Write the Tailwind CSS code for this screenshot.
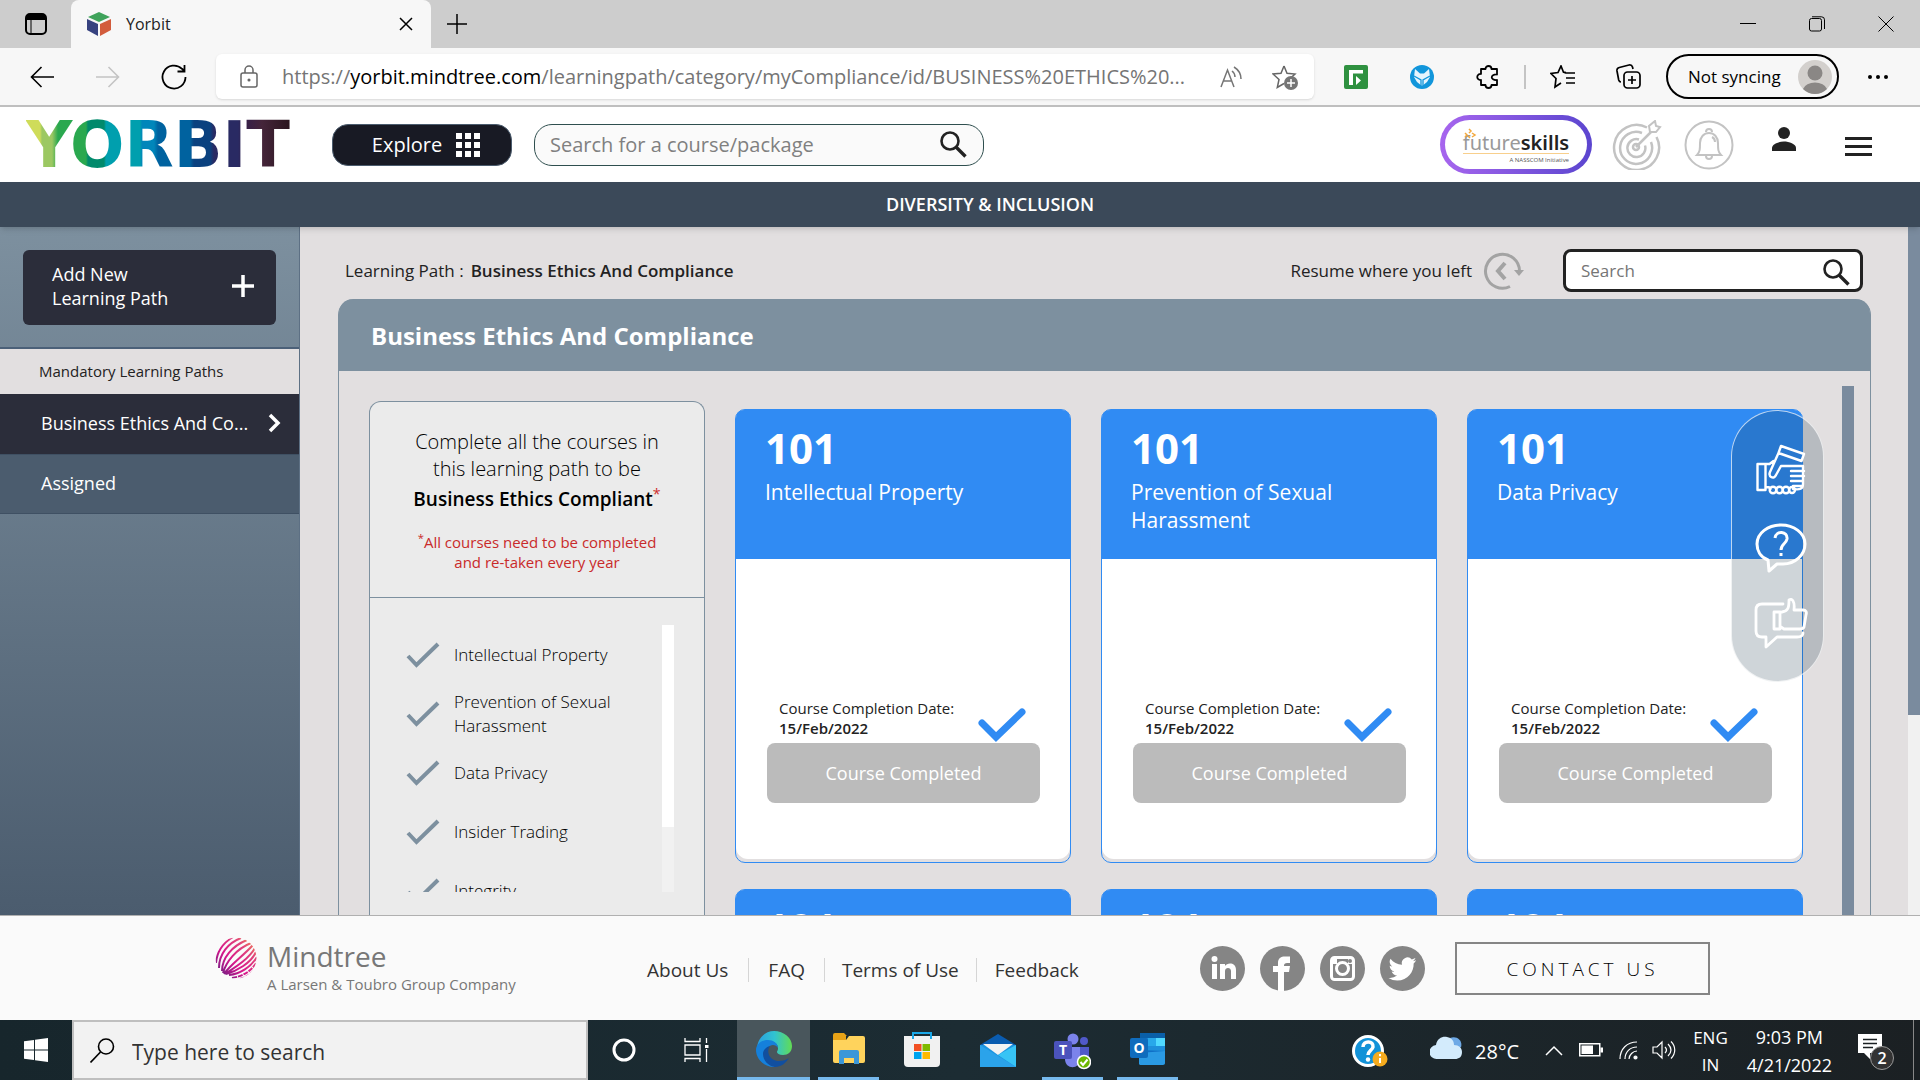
<!DOCTYPE html>
<html lang="en">
<head>
<meta charset="utf-8">
<title>Yorbit</title>
<script src="https://cdn.jsdelivr.net/npm/@tailwindcss/browser@4"></script>
</head>
<body class="flex h-screen flex-col overflow-hidden bg-[#e2dfe0] font-['Open_Sans',sans-serif] text-[#222]">

<svg class="hidden">
  <symbol id="mag" viewBox="0 0 27 27"><circle cx="10" cy="10" r="8.500" fill="none" stroke="#222" stroke-width="2.600"/><path d="M16 16l9.500 9.500" stroke="#222" stroke-width="3.300"/></symbol>
  <symbol id="tick" viewBox="0 0 34 26"><path d="M2 14l8.500 9L32 2" fill="none" stroke="#7d909f" stroke-width="4"/></symbol>
  <symbol id="done" viewBox="0 0 48 34"><path d="M4 15l14 14L44 4" fill="none" stroke="#308bf3" stroke-width="7" stroke-linecap="round"/></symbol>
</svg>

<!-- Browser tabs -->
<div class="flex h-12 shrink-0 bg-[#cdcdcd]">
  <button aria-label="Tab actions" class="flex w-[71px] items-center justify-center"><svg width="22" height="22" viewBox="0 0 22 22"><rect x="1" y="1" width="20" height="20" rx="4" fill="none" stroke="#000" stroke-width="2"/><path d="M1 5a4 4 0 014-4h12a4 4 0 014 4v2H1z"/><path d="M6 6v15" stroke="#000"/></svg></button>
  <div class="flex w-[360px] items-center rounded-t-lg bg-[#f7f7f7] pr-4 pl-4">
    <svg width="24" height="24" viewBox="0 0 24 24"><path d="M12 0l11 5-11 5L1 5z" fill="#3fa35b"/><path d="M0 7l11 5v12L0 18z" fill="#36427f"/><path d="M24 7l-11 5v12l11-6z" fill="#d25c3c"/></svg>
    <span class="ml-[15px] flex-1 text-base leading-6 text-[#222]">Yorbit</span>
    <button aria-label="Close tab"><svg width="18" height="18" viewBox="0 0 18 18"><path d="M3 3l12 12M15 3L3 15" stroke="#000" stroke-width="1.500"/></svg></button>
  </div>
  <button aria-label="New tab" class="flex w-[52px] items-center justify-center"><svg width="20" height="20" viewBox="0 0 20 20"><path d="M10 0v20M0 10h20" stroke="#000" stroke-width="1.500"/></svg></button>
  <div class="flex-1"></div>
  <button aria-label="Minimize" class="flex w-[69px] items-center justify-center"><svg width="16" height="16"><path d="M0 7.500h16" stroke="#000" stroke-width="1"/></svg></button>
  <button aria-label="Restore" class="flex w-[69px] items-center justify-center"><svg width="16" height="16" fill="none" stroke="#000"><rect x=".5" y="2.500" width="12" height="12.500" rx="2"/><path d="M3 .8h9.500a3 3 0 013 3V13"/></svg></button>
  <button aria-label="Close" class="flex w-[69px] items-center justify-center"><svg width="16" height="16"><path d="M.5.5l15 15M15.500.5l-15 15" stroke="#000"/></svg></button>
</div>

<!-- Address bar -->
<div class="flex h-[59px] shrink-0 items-center border-b-2 border-[#bfbfbf] bg-[#f7f7f7] pr-[3px] pl-[9px]">
  <button aria-label="Back" class="flex w-[66px] justify-center"><svg width="24" height="22" viewBox="0 0 24 22" fill="none" stroke="#000" stroke-width="1.600"><path d="M24 11H1M11.500 1L1.500 11l10 10"/></svg></button>
  <button aria-label="Forward" class="flex w-[66px] justify-center"><svg width="24" height="22" viewBox="0 0 24 22" fill="none" stroke="#c4c4c4" stroke-width="1.600"><path d="M0 11h23M12.500 1l10 10-10 10"/></svg></button>
  <button aria-label="Refresh" class="flex w-[66px] justify-center"><svg width="26" height="26" viewBox="0 0 26 26" fill="none" stroke="#000" stroke-width="1.800"><path d="M24.500 13A11.500 11.500 0 1121 4.800L23.500 7M23.500 1v6.500h-7"/></svg></button>
  <div class="ml-[9px] flex h-[45px] flex-1 items-center rounded-md bg-white pr-4 pl-6 shadow-sm">
    <svg width="18" height="23" viewBox="0 0 18 23" fill="none" stroke="#666" stroke-width="1.500"><rect x="1" y="8" width="16" height="14" rx="2"/><path d="M5 8V5a4 4 0 018 0v3"/><circle cx="9" cy="15" r=".8" fill="#666"/></svg>
    <div class="ml-6 flex-1 text-[20px] leading-7 whitespace-nowrap text-[#757575]">https://<span class="text-black">yorbit.mindtree.com</span>/learningpath/category/myCompliance/id/BUSINESS%20ETHICS%20...</div>
    <button aria-label="Read aloud" class="mr-[30px]"><svg width="22" height="22" viewBox="0 0 22 22" fill="none" stroke="#757575" stroke-width="1.500"><path d="M1 21L7.500 4 14 21M3.500 15h8M12 5c2 1.500 3 4 3 6M14 1c4 2.500 7 6 7 12"/></svg></button>
    <button aria-label="Add to favorites"><svg width="26" height="26" viewBox="0 0 26 26"><path d="M12 2l3 7.200 8 .8-6 5.500M12 2L9 9.200 1 10l6 5.500-1.700 8L12 19.500" fill="none" stroke="#666" stroke-width="1.500"/><circle cx="19" cy="19" r="7" fill="#757575"/><path d="M19 15v8M15 19h8" stroke="#fff" stroke-width="1.500"/></svg></button>
  </div>
  <button aria-label="Flow extension" class="ml-[9px] flex w-[66px] justify-center"><svg width="24" height="24" viewBox="0 0 24 24"><rect width="24" height="24" rx="2" fill="#2f9140"/><path d="M5 20V5h14v3.500H9V20z" fill="#fff"/><path d="M12 11v9l5-4.500z" fill="#fff"/></svg></button>
  <button aria-label="Fox extension" class="flex w-[66px] justify-center"><svg width="24" height="24" viewBox="0 0 24 24"><circle cx="12" cy="12" r="12" fill="#1296db"/><path d="M5 4l5 4.500h4L19 4l1 8-3 5-5 4-5-4-3-5z" fill="#e6f4fd"/><path d="M4 11l7 4v6M20 11l-7 4v6" fill="none" stroke="#1296db" stroke-width="1.300"/></svg></button>
  <button aria-label="Extensions" class="flex w-[66px] justify-center"><svg width="24" height="24" viewBox="0 0 24 24" fill="none" stroke="#000" stroke-width="1.800" stroke-linejoin="round"><path d="M5 4h4.500c0-4 6-4 6 0H21v5.500c-7-.5-7 6 0 5.500V20h-5.500c0 4-6 4-6 0H5v-5c-5 .5-5-6.500 0-6z"/></svg></button>
  <div class="mx-[3px] h-6 w-[2px] bg-[#c4c4c4]"></div>
  <button aria-label="Favorites" class="flex w-[66px] justify-center"><svg width="25" height="24" viewBox="0 0 25 24" fill="none" stroke="#000" stroke-width="1.700"><path d="M16 7.500l-2.500-.3L11 1 8 7.500 1 8.500l5 5L5 22l6-4M14.500 8H25M16 13h9M16 18h9"/></svg></button>
  <button aria-label="Collections" class="flex w-[66px] justify-center"><svg width="25" height="25" viewBox="0 0 25 25" fill="none" stroke="#000" stroke-width="1.700"><rect x="8" y="8" width="16" height="16" rx="3.500"/><path d="M16 12v8M12 16h8M5 18c-1.500 0-2-1-2.300-2L1 7c-.3-2 .5-3 2.300-3.500L13 1c2-.3 3 .3 3.500 2l.5 2"/></svg></button>
  <button class="ml-[5px] flex h-[45px] w-[173px] items-center justify-between rounded-full border-2 border-black pr-[5px] pl-[20px] text-[17px] text-black">Not syncing
    <svg width="34" height="34" viewBox="0 0 34 34"><circle cx="17" cy="17" r="17" fill="#d3d0cd"/><circle cx="17" cy="13" r="7.500" fill="#8a8785"/><path d="M5 29a12.500 9 0 0124 0 17 17 0 01-24 0z" fill="#8a8785"/></svg>
  </button>
  <button aria-label="Settings" class="flex w-[78px] justify-center"><svg width="20" height="4"><circle cx="2" cy="2" r="2"/><circle cx="10" cy="2" r="2"/><circle cx="18" cy="2" r="2"/></svg></button>
</div>

<!-- Site header -->
<header class="flex h-[75px] shrink-0 items-center bg-white pr-12 pl-[26px]">
  <a href="#" class="w-[306px] bg-[linear-gradient(90deg,#cfdc5a_0,#cfdc5a_14px,#9cc862_16px,#9cc862_26px,#2aa84f_32px,#2aa84f_60px,#018a6c_62px,#018a6c_78px,#009fae_80px,#009fae_114px,#0086ba_116px,#0086ba_128px,#00629f_132px,#00629f_164px,#0a417f_168px,#0a417f_184px,#292a63_188px,#292a63_212px,#351f4a_218px,#45253a_236px,#2c1620_262px)] bg-clip-text font-['DejaVu_Sans',sans-serif] text-[64px] leading-[74px] font-bold text-transparent">YORBIT</a>
  <button class="flex h-[42px] w-[180px] items-center justify-center gap-3.5 rounded-2xl border border-[#4b5c6e] bg-[#181a24] pl-2 text-[20px] text-white">Explore
    <svg width="24" height="24" viewBox="0 0 24 24" fill="#fff"><path d="M0 0h6v6H0zM9 0h6v6H9zM18 0h6v6h-6zM0 9h6v6H0zM9 9h6v6H9zM18 9h6v6h-6zM0 18h6v6H0zM9 18h6v6H9zM18 18h6v6h-6z"/></svg>
  </button>
  <form class="ml-[22px] flex h-[42px] w-[450px] items-center rounded-[18px] border border-[#2f4f4f] bg-[#fafafa] pr-4 pl-[15px]">
    <input aria-label="Search for a course or package" placeholder="Search for a course/package" class="min-w-0 flex-1 text-[20px] outline-none placeholder:text-[#808080]">
    <button aria-label="Search"><svg width="27" height="27"><use href="#mag"/></svg></button>
  </form>
  <div class="flex-1"></div>
  <a href="#" class="h-[59px] w-[152px] rounded-full bg-linear-to-r from-[#a765ee] to-[#5b45cf] p-[5px]">
    <span class="relative flex h-full flex-col items-center justify-center rounded-full bg-white pt-2 leading-none">
      <span class="font-['Noto_Sans',sans-serif] text-[20px] leading-5 text-[#999]">future<b class="font-semibold text-[#222]">skills</b></span>
      <span class="h-px w-[106px] bg-[#f8cf8c]"></span>
      <span class="w-[106px] pt-[2px] text-right text-[6px] leading-[8px] text-[#555]">A NASSCOM Initiative</span>
      <svg class="absolute top-2 left-[18px]" width="14" height="13" fill="none" stroke="#f3a83c" stroke-width="1.500"><path d="M2 5l2 2-2 2M6 1l2 2-2 2M9 5l3 2-3 2M5 8l2 2"/></svg>
    </span>
  </a>
  <button aria-label="Goals" class="ml-5"><svg width="50" height="50" viewBox="0 0 50 50" fill="none" stroke="#c3c3c3" stroke-width="2.500"><path d="M35 7.500A22.500 22.500 0 1044.500 17M30 13A16 16 0 1039 22M27 19.500a9 9 0 106 6M24 27l15-15"/><path d="M38 12l-1-6 6-5 1 5 4 1-4 5z" stroke-width="2"/><circle cx="24" cy="27" r="3"/></svg></button>
  <button aria-label="Notifications" class="ml-[22px]"><svg width="50" height="50" viewBox="0 0 50 50" fill="none" stroke="#c3c3c3" stroke-width="2"><circle cx="25" cy="25" r="23.500"/><path d="M13 35c3-3 3-6 3-12 0-6 4-10 9-10s9 4 9 10c0 6 0 9 3 12zM22 12a3 3 0 016 0M22 36a3 3 0 006 0M28 17c2 1 3 3 3 5"/></svg></button>
  <button aria-label="Profile" class="mb-3 ml-[37px]"><svg width="26" height="26" viewBox="0 0 26 26" fill="#222"><circle cx="13" cy="7" r="6"/><path d="M1 25v-3c0-4 7-6.500 12-6.500S25 18 25 22v3z"/></svg></button>
  <button aria-label="Menu" class="mt-1 ml-12"><svg width="27" height="19" viewBox="0 0 27 19"><path d="M0 1.500h27M0 9.500h27M0 17.500h27" stroke="#222" stroke-width="3"/></svg></button>
</header>

<div class="relative z-10 flex h-[45px] shrink-0 items-center justify-center bg-[#3b4959] pl-[60px] text-[18px] font-semibold text-white shadow-md">DIVERSITY &amp; INCLUSION</div>

<div class="relative flex min-h-0 flex-1">
  <!-- Sidebar -->
  <nav class="w-[300px] shrink-0 border-r border-[#5d7084] bg-linear-to-b from-[#7d909f] to-[#4b5c6e]">
    <div class="px-[23px] pt-[23px] pb-[22px]">
      <button class="flex h-[75px] w-full items-center justify-between rounded-md bg-[#2b2d3a] pr-[22px] pb-[4px] pl-[29px] text-left text-[18px] leading-6 text-white"><span>Add New<br>Learning Path</span>
        <svg width="22" height="22"><path d="M11 0v22M0 11h22" stroke="#fff" stroke-width="3.500"/></svg></button>
    </div>
    <h2 class="h-[47px] border-t-2 border-[#4b6078] bg-[#e2dfe0] pl-[39px] text-[15px] leading-[45px]">Mandatory Learning Paths</h2>
    <a href="#" class="flex h-[60px] items-center justify-between bg-[#2b2d3a] pr-[18px] pb-[2px] pl-[41px] text-[18px] text-white">Business Ethics And Co...
      <svg width="13" height="20" fill="none" stroke="#fff" stroke-width="3.500"><path d="M2 2l8 8-8 8"/></svg></a>
    <a href="#" class="flex h-[60px] items-center border-y border-[#3f5063] bg-[#4b5c6e] pb-[2px] pl-[41px] text-[18px] text-white">Assigned</a>
  </nav>

  <!-- Learning path -->
  <main class="flex min-w-0 flex-1 flex-col pt-[22px] pl-[38px]">
    <div class="flex h-[43px] items-center pr-[45px] pl-[7px] text-[17px]">
      <span>Learning Path :</span><b class="ml-[7px] font-semibold">Business Ethics And Compliance</b>
      <span class="ml-auto">Resume where you left</span>
      <button aria-label="Resume" class="ml-[11px]"><svg width="42" height="38" viewBox="0 0 42 38" fill="none" stroke="#a3a3a3" stroke-width="3"><path d="M27 34.500A17 17 0 1136.500 19"/><path d="M22 11l-7 8 7 8" stroke-width="4"/><path d="M31 18h10l-5 6z" fill="#a3a3a3" stroke="none"/></svg></button>
      <form class="ml-[38px] flex h-[43px] w-[300px] items-center rounded-lg border-[3px] border-[#222] bg-white pr-[10px] pl-[15px]">
        <input aria-label="Search" placeholder="Search" class="min-w-0 flex-1 text-[17px] outline-none placeholder:text-[#757575]">
        <button aria-label="Search courses" class="pt-1"><svg width="27" height="27"><use href="#mag"/></svg></button>
      </form>
    </div>

    <section class="mt-[7px] mr-[37px] flex min-h-0 flex-1 flex-col rounded-t-2xl border-x border-[#7d909f]">
      <h1 class="h-[72px] shrink-0 rounded-t-[14px] bg-[#7d909f] pl-8 text-[24px] leading-[74px] font-bold text-white">Business Ethics And Compliance</h1>
      <div class="flex min-h-0 flex-1 overflow-hidden pr-4 pl-[30px]">
        <aside class="mt-[30px] flex w-[336px] shrink-0 flex-col rounded-t-xl border border-b-0 border-[#7d909f] bg-[#ebebeb]">
          <div class="h-[196px] shrink-0 border-b border-[#7d909f] pt-[26px] text-center text-[19px] leading-[27px] text-black">
            <p class="text-[20px] font-light">Complete all the courses in<br>this learning path to be</p>
            <p class="mt-1 font-semibold">Business Ethics Compliant<sup class="font-normal text-[#cf2e2e]">*</sup></p>
            <p class="mt-[19px] text-[15px] leading-5 font-medium text-[#c92a2a]"><sup>*</sup>All courses need to be completed<br>and re-taken every year</p>
          </div>
          <div class="mt-[27px] mb-[23px] flex min-h-0 flex-1 overflow-hidden pr-[30px] pl-9 text-[17px] leading-6 font-light text-black">
            <ul class="flex-1">
              <li class="flex h-[59px] items-center gap-[14px]"><svg width="34" height="26"><use href="#tick"/></svg>Intellectual Property</li>
              <li class="flex h-[59px] items-center gap-[14px]"><svg width="34" height="26"><use href="#tick"/></svg><span>Prevention of Sexual<br>Harassment</span></li>
              <li class="flex h-[59px] items-center gap-[14px]"><svg width="34" height="26"><use href="#tick"/></svg>Data Privacy</li>
              <li class="flex h-[59px] items-center gap-[14px]"><svg width="34" height="26"><use href="#tick"/></svg>Insider Trading</li>
              <li class="flex h-[59px] items-center gap-[14px]"><svg width="34" height="26"><use href="#tick"/></svg>Integrity</li>
            </ul>
            <div class="w-3 bg-[#f1f1f1]"><div class="h-[202px] bg-white"></div></div>
          </div>
        </aside>

        <div class="mt-[38px] grid flex-1 auto-rows-[454px] grid-cols-3 gap-x-[30px] gap-y-[26px] pl-[30px]">
          <article class="rounded-[10px] border border-[#308bf3]">
            <div class="h-[149px] rounded-t-lg bg-[#308bf3] px-[29px] pt-[9px] text-white"><h2 class="text-[42px] leading-[58px] font-bold">101</h2><h3 class="pt-px text-[21px] leading-7">Intellectual Property</h3></div>
            <div class="flex h-[300px] flex-col justify-end rounded-b-xl bg-white pr-[30px] pb-14 pl-[31px]">
              <div class="mb-px flex items-end justify-between pr-[14px] pl-3 text-[15px] leading-5"><p class="mb-1">Course Completion Date:<br><b class="font-semibold">15/Feb/2022</b></p><svg width="48" height="34"><use href="#done"/></svg></div>
              <button class="h-[60px] shrink-0 rounded-lg bg-[#bbb] text-[18px] text-white">Course Completed</button>
            </div>
          </article>
          <article class="rounded-[10px] border border-[#308bf3]">
            <div class="h-[149px] rounded-t-lg bg-[#308bf3] px-[29px] pt-[9px] text-white"><h2 class="text-[42px] leading-[58px] font-bold">101</h2><h3 class="pt-px text-[21px] leading-7">Prevention of Sexual Harassment</h3></div>
            <div class="flex h-[300px] flex-col justify-end rounded-b-xl bg-white pr-[30px] pb-14 pl-[31px]">
              <div class="mb-px flex items-end justify-between pr-[14px] pl-3 text-[15px] leading-5"><p class="mb-1">Course Completion Date:<br><b class="font-semibold">15/Feb/2022</b></p><svg width="48" height="34"><use href="#done"/></svg></div>
              <button class="h-[60px] shrink-0 rounded-lg bg-[#bbb] text-[18px] text-white">Course Completed</button>
            </div>
          </article>
          <article class="rounded-[10px] border border-[#308bf3]">
            <div class="h-[149px] rounded-t-lg bg-[#308bf3] px-[29px] pt-[9px] text-white"><h2 class="text-[42px] leading-[58px] font-bold">101</h2><h3 class="pt-px text-[21px] leading-7">Data Privacy</h3></div>
            <div class="flex h-[300px] flex-col justify-end rounded-b-xl bg-white pr-[30px] pb-14 pl-[31px]">
              <div class="mb-px flex items-end justify-between pr-[14px] pl-3 text-[15px] leading-5"><p class="mb-1">Course Completion Date:<br><b class="font-semibold">15/Feb/2022</b></p><svg width="48" height="34"><use href="#done"/></svg></div>
              <button class="h-[60px] shrink-0 rounded-lg bg-[#bbb] text-[18px] text-white">Course Completed</button>
            </div>
          </article>
          <article class="rounded-[10px] border border-[#308bf3]"><div class="h-[149px] rounded-t-lg bg-[#308bf3] px-[29px] pt-[9px] text-white"><h2 class="text-[42px] leading-[58px] font-bold">101</h2></div></article>
          <article class="rounded-[10px] border border-[#308bf3]"><div class="h-[149px] rounded-t-lg bg-[#308bf3] px-[29px] pt-[9px] text-white"><h2 class="text-[42px] leading-[58px] font-bold">101</h2></div></article>
          <article class="rounded-[10px] border border-[#308bf3]"><div class="h-[149px] rounded-t-lg bg-[#308bf3] px-[29px] pt-[9px] text-white"><h2 class="text-[42px] leading-[58px] font-bold">101</h2></div></article>
        </div>
        <div class="mt-[15px] ml-[39px] w-3 shrink-0 bg-[#7a8b9e]"></div>
      </div>
    </section>
  </main>
  <div class="w-3 shrink-0 bg-[#f1f1f1]"><div class="h-[488px] bg-[#7a8b9e]"></div></div>

  <!-- Floating help actions -->
  <div class="absolute top-[183px] right-24 flex h-[272px] w-[93px] flex-col items-center rounded-full border border-white/70 bg-[#0f2c42]/20 pt-[33px] pl-[7px]">
    <button aria-label="Onboarding"><svg width="50" height="52" viewBox="0 0 50 52" fill="none" stroke="#fff" stroke-width="2.400" stroke-linejoin="round" stroke-linecap="round"><path d="M1.500 20h8v26h-8zM9.500 20h4l4-3M25 2l23 8-2.500 7-23-8zM22.500 9L14 28c-2 5 4 8 6 3l5-9h22v18c0 5-3 6-10 5M9.500 43c3 0 4 0 5 2M48 27H35M48 32H35M47 37H35M46 42H37"/><circle cx="17" cy="46" r="3.300"/><circle cx="23.500" cy="46" r="3.300"/><circle cx="30" cy="46" r="3.300"/><circle cx="36" cy="46" r="3"/></svg></button>
    <button aria-label="Help" class="mt-[27px]"><svg width="52" height="50" viewBox="0 0 52 50" fill="none" stroke="#fff" stroke-width="3" stroke-linejoin="round"><path d="M13 37C5 34 2 27 2 21 2 10 13 2 26 2s24 8 24 19-10 20-22 20h-6l-8 7z"/><path d="M20 15c1-8 13-7 12 1-1 5-6 5-6 11"/><path d="M26 30v3"/></svg></button>
    <button aria-label="Feedback" class="mt-6"><svg width="54" height="52" viewBox="0 0 54 52" fill="none" stroke="#fff" stroke-width="2.800" stroke-linejoin="round" stroke-linecap="round"><path d="M29 7H8c-4 0-6 2-6 6v21c0 4 2 6 6 6h4v10l11-10h20c4 0 6-1 6-4"/><path d="M20 15h6v17h-6zM28 15c6-1 7-4 7-12 3-2 6 1 5 10h9c3 0 4 2 3 5l-2 12c-1 2-2 2-4 2H30l-3-2"/></svg></button>
  </div>
</div>

<!-- Site footer -->
<footer class="flex h-[105px] shrink-0 items-center border-t border-[#b0b0b0] bg-[#fafafa] pl-[215px]">
  <div class="flex w-[432px] pb-[6px]">
    <svg width="42" height="42" viewBox="0 0 42 42"><defs><linearGradient id="mt" gradientUnits="userSpaceOnUse" x1="2" y1="40" x2="40" y2="2"><stop stop-color="#5b2483"/><stop offset=".4" stop-color="#d6168b"/><stop offset=".75" stop-color="#e0457b"/><stop offset="1" stop-color="#f58a4b"/></linearGradient><clipPath id="mc"><circle cx="21" cy="21" r="20.500"/></clipPath></defs>
      <g clip-path="url(#mc)" fill="none" stroke="url(#mt)" stroke-width="2"><path d="M1 26C2 14 8 6 18 0M4 31C4 17 13 6 26 1M7 34C7 21 17 9 32 3M8 36C11 25 21 12 36 6M9 37C15 28 27 20 38 8M10 37C19 31 33 23 40 11M11 37C22 34 36 26 41 15M14 38C25 37 36 30 42 20"/><path d="M17 41C29 39 36 34 42 25M25 42C33 40 37 36 41 31" stroke-dasharray="5 1"/></g></svg>
    <div class="ml-[10px] text-[#777]"><div class="text-[28px] leading-[38px]">Mindtree</div><div class="text-[15px] leading-[18px] font-medium">A Larsen &amp; Toubro Group Company</div></div>
  </div>
  <div class="flex items-center pt-1 text-[19px] leading-6 text-[#333]">
    <a href="#" class="border-r border-[#d5d5d5] pr-5">About Us</a><a href="#" class="border-r border-[#d5d5d5] px-[19px]">FAQ</a><a href="#" class="border-r border-[#d5d5d5] px-[17px]">Terms of Use</a><a href="#" class="pl-[18px]">Feedback</a>
  </div>
  <div class="ml-auto flex gap-[15px]">
    <a href="#" aria-label="LinkedIn"><svg width="45" height="45" viewBox="0 0 45 45"><circle cx="22.500" cy="22.500" r="22.500" fill="#858585"/><g fill="#fff"><circle cx="14.500" cy="13" r="3"/><path d="M12 18h5v15h-5zM20 18h5v2c2-3.500 11-4 11 4v9h-5v-8c0-4-6-4-6 0v8h-5z"/></g></svg></a>
    <a href="#" aria-label="Facebook"><svg width="45" height="45" viewBox="0 0 45 45"><circle cx="22.500" cy="22.500" r="22.500" fill="#858585"/><path d="M18 45V26h-5v-6h5v-3c0-5 3-6.500 7-6.500h5V17h-3c-2 0-3 1-3 2.500V20h6l-1 6h-5v19z" fill="#fff"/></svg></a>
    <a href="#" aria-label="Instagram"><svg width="45" height="45" viewBox="0 0 45 45"><circle cx="22.500" cy="22.500" r="22.500" fill="#858585"/><rect x="11.500" y="11.500" width="22" height="22" rx="3" fill="none" stroke="#fff" stroke-width="3"/><circle cx="22.500" cy="22.500" r="6" fill="none" stroke="#fff" stroke-width="3"/><path d="M11 18h6v-6h-6zM28 18h6v-5h-6z" fill="#fff"/><circle cx="30" cy="15" r="2" fill="#858585"/></svg></a>
    <a href="#" aria-label="Twitter"><svg width="45" height="45" viewBox="0 0 45 45"><circle cx="22.500" cy="22.500" r="22.500" fill="#858585"/><path transform="translate(8.500 8.500) scale(1.170)" d="M23.600 4.900c-.8.400-1.800.6-2.700.8 1-.6 1.700-1.600 2.100-2.700-.9.500-2 .9-3.100 1.200a4.900 4.900 0 00-8.400 4.500C7.700 8.500 4 6.600 1.700 3.600a4.900 4.900 0 001.500 6.600c-.8 0-1.600-.2-2.200-.6v.1c0 2.400 1.700 4.300 3.900 4.800-.7.200-1.500.2-2.200.1.600 2 2.400 3.400 4.600 3.400A9.900 9.900 0 010 20a14 14 0 007.500 2.200c9.100 0 14.300-7.700 14-14.600.9-.7 1.600-1.600 2.100-2.700z" fill="#fff"/></svg></a>
  </div>
  <button class="mr-[210px] ml-[30px] h-[53px] w-[255px] border-2 border-[#858585] pt-[2px] text-[19px] font-light tracking-[4px] text-black">CONTACT US</button>
</footer>

<!-- Taskbar -->
<div class="flex h-[60px] shrink-0 items-stretch bg-linear-to-r from-[#17262c] via-[#1c2c33] to-[#1b2023] text-white">
  <button aria-label="Start" class="flex w-[72px] items-center justify-center"><svg width="24" height="24" viewBox="0 0 24 24" fill="#fff"><path d="M0 3.300l10-1.400v9.500H0zM11 1.700L24 0v11.400H11zM0 12.500h10v9.500L0 20.700zM11 12.500h13V24l-13-1.800z"/></svg></button>
  <div class="flex w-[516px] items-center border-2 border-[#bfbfbf] bg-[#f2f2f2] pl-4">
    <svg width="25" height="25" viewBox="0 0 25 25" fill="none" stroke="#000" stroke-width="1.600"><circle cx="16" cy="8.500" r="7.500"/><path d="M10.500 14L.5 24.500"/></svg>
    <input aria-label="Type here to search" placeholder="Type here to search" class="ml-[17px] min-w-0 flex-1 pt-[5px] text-[21px] outline-none placeholder:text-[#333]">
  </div>
  <button aria-label="Cortana" class="flex w-[72px] items-center justify-center"><svg width="24" height="24"><circle cx="12" cy="12" r="10" fill="none" stroke="#fff" stroke-width="3"/></svg></button>
  <button aria-label="Task view" class="flex w-[77px] items-center justify-center pr-[5px]"><svg width="25" height="24" viewBox="0 0 25 24" fill="none" stroke="#fff" stroke-width="1.300"><path d="M1 0v3.500h15V0M1 24v-3.500h15V24M1 7h15v10H1zM22.500 0v5M22.500 11v13"/><path d="M21 7h3.500v3H21z" fill="#fff" stroke="none"/></svg></button>
  <button aria-label="Edge" class="flex w-[73px] items-center justify-center border-b-[3px] border-[#76b9ed] bg-[#49565c]"><svg width="36" height="36" viewBox="0 0 36 36"><defs><linearGradient id="eg" x1="0" y1="0" x2="1" y2="0"><stop stop-color="#2a9fe0"/><stop offset=".5" stop-color="#31c3d0"/><stop offset="1" stop-color="#62dc54"/></linearGradient></defs><path d="M1 17C2 6 10 0 18 0c10 0 18 7 18 15 0 6-4 9-9 9-4 0-6-1.500-6-3 0-1 1-1 1-4 0-4-4-7-9-7-6 0-10 3-12 7z" fill="url(#eg)"/><path d="M0 19c0-6 6-10 12-10 5 0 10 3 10 8-1-2-3-3-5-3-4 0-7 4-7 9 0 6 4 11 10 13C10 37 0 29 0 19z" fill="#1580db"/><path d="M14 15c-4 5-1 15 9 15 4 0 7-1 10-3-3 5-8 9-14 9-7-1-12-7-12-13 0-4 3-7 7-8z" fill="#114f9f"/></svg></button>
  <button aria-label="File Explorer" class="ml-2 flex w-[61px] items-center justify-center border-b-[3px] border-[#76b9ed]"><svg width="32" height="32" viewBox="0 0 32 32"><path d="M0 2a2 2 0 012-2h9l3 3h-1v5H0z" fill="#e8a317"/><path d="M0 7h13l3-4h14a2 2 0 012 2v23a2 2 0 01-2 2H2a2 2 0 01-2-2z" fill="#ffd35c"/><path d="M6 31V19a2 2 0 012-2h16a2 2 0 012 2v12h-5v-6H11v6z" fill="#3b97d8"/></svg></button>
  <button aria-label="Store" class="ml-[6px] flex w-[74px] items-center justify-center"><svg width="36" height="36" viewBox="0 0 36 36"><path d="M9 7V1h18v6" fill="none" stroke="#1ba8e8" stroke-width="2"/><path d="M0 4h36v27a4 4 0 01-4 4H4a4 4 0 01-4-4z" fill="#f1f1f1"/><path d="M9 7V4M27 7V4" stroke="#1ba8e8" stroke-width="2"/><path d="M10 12h7.500v7H10z" fill="#f25022"/><path d="M18.500 12H26v7h-7.500z" fill="#7fba00"/><path d="M10 20h7.500v7H10z" fill="#00a4ef"/><path d="M18.500 20H26v7h-7.500z" fill="#ffb900"/></svg></button>
  <button aria-label="Mail" class="flex w-[76px] items-center justify-center pl-[2px]"><svg width="36" height="33" viewBox="0 0 36 33"><path d="M0 11L18 0l18 11z" fill="#0a5cb0"/><path d="M0 11h36v22H0z" fill="#1c94e0"/><path d="M3 10h30L18 21z" fill="#f3f3f3"/><path d="M36 11v22L18 21z" fill="#37c4f5"/><path d="M0 33V11l36 22z" fill="#2ba3ea"/></svg></button>
  <button aria-label="Teams" class="ml-[7px] flex w-[61px] items-center justify-center border-b-[3px] border-[#76b9ed]"><svg class="mt-[6px]" width="37" height="38" viewBox="0 0 37 38"><circle cx="30" cy="8" r="4" fill="#5059c9"/><path d="M24 14h11v12c0 6-8 6-11 3z" fill="#5059c9"/><circle cx="19" cy="6" r="5.500" fill="#7b83eb"/><path d="M11 14h15v12c0 11-15 11-15 0z" fill="#7b83eb"/><rect y="8" width="18" height="18" rx="2" fill="#4b53bc"/><text x="9" y="22" fill="#fff" font-size="14" font-weight="700" text-anchor="middle">T</text><circle cx="30" cy="29" r="6.500" fill="#6bb700" stroke="#fff" stroke-width="1.500"/><path d="M26.500 29l2.500 3 4.500-5.500" fill="none" stroke="#fff" stroke-width="2"/></svg></button>
  <button aria-label="Outlook" class="ml-[14px] flex w-[61px] items-center justify-center border-b-[3px] border-[#76b9ed]"><svg width="36" height="32" viewBox="0 0 36 32"><rect x="10" width="25" height="22" rx="2" fill="#1e8fdb"/><path d="M10 0h25v5H10z" fill="#0a5fa8"/><path d="M18 5h8v8h-8z" fill="#28a8ea"/><path d="M26 5h9v8h-9z" fill="#50d9ff"/><path d="M9 17l26 14V18z" fill="#0f6fc6"/><path d="M9 31V20l26-2v12a2 2 0 01-2 2H11a2 2 0 01-2-1z" fill="#2a9ae4"/><rect y="5" width="18" height="20" rx="2" fill="#0f6cbd"/><text x="9" y="20" fill="#fff" font-size="14" font-weight="700" text-anchor="middle">O</text></svg></button>

  <div class="ml-auto flex items-center">
    <button aria-label="Get help" class="mt-1 mr-[42px]"><svg width="36" height="34" viewBox="0 0 36 34"><circle cx="16" cy="16" r="14.500" fill="#1292d8" stroke="#fff" stroke-width="3"/><path d="M11 12c0-7 11-6.500 10 0-.5 3-5 4-5 8" fill="none" stroke="#fff" stroke-width="3.500"/><circle cx="16" cy="24.500" r="2.200" fill="#fff"/><circle cx="28" cy="24" r="7.500" fill="#f5ab1e"/><path d="M28 23v5M28 19v2.200" stroke="#fff" stroke-width="2"/></svg></button>
    <button class="mr-[26px] flex items-center gap-[13px] pt-1 text-[20px]"><svg class="mb-2" width="32" height="24" viewBox="0 0 32 24"><path d="M20 2c7-3 13 3 11 9l-6 4z" fill="#6ea9e6"/><path d="M7 23a7 7 0 01-1-14C7 2 13 0 17 1c5 1 7 4 7 8 5 0 8 3 8 7 0 5-3 7-7 7z" fill="#d3ebfc"/></svg>28°C</button>
    <button aria-label="Show hidden icons" class="mr-4"><svg width="18" height="11" fill="none" stroke="#fff" stroke-width="1.500"><path d="M1 10l8-8 8 8"/></svg></button>
    <button aria-label="Battery" class="mr-4"><svg width="24" height="14" viewBox="0 0 24 14"><rect x=".75" y=".75" width="20" height="12" fill="none" stroke="#fff" stroke-width="1.500"/><path d="M2.500 2.500H14v8.500H2.500zM21.500 4.500H24v5h-2.500z" fill="#fff"/></svg></button>
    <button aria-label="Wi-Fi" class="mr-[13px]"><svg width="20" height="19" viewBox="0 0 20 19" fill="none" stroke="#fff" stroke-width="1.200"><path d="M1 18C1 8 8 1 18 1M6 18C6 11 11 6 18 6M10 18c0-4 4-8 8-8"/><circle cx="16.500" cy="16.500" r="1.500" fill="#fff"/></svg></button>
    <button aria-label="Volume" class="mr-[17px]"><svg width="24" height="20" viewBox="0 0 24 20" fill="none" stroke="#fff" stroke-width="1.200"><path d="M1 7h4l5-5v16l-5-5H1zM13 7c2 2 2 4 0 6M16 4c4 4 4 8 0 12M19 1.500c5 5 5 12 0 17"/></svg></button>
    <button class="mr-[19px] pt-[2px] text-center text-[17px] leading-[27px]">ENG<br>IN</button>
    <button class="mr-[26px] pt-px text-center text-[18px] leading-7">9:03 PM<br>4/21/2022</button>
    <button aria-label="Notifications, 2 new" class="relative mt-1 mr-[19px] h-9 w-9"><svg width="36" height="36" viewBox="0 0 36 36"><path d="M0 0h24v19H12v6l-6-6H0z" fill="#fff"/><path d="M5 5.500h14M5 9.500h14M5 13.500h10" stroke="#1b2023" stroke-width="1.500"/><circle cx="24" cy="24" r="11.500" fill="#333" stroke="#999"/><text x="24" y="30" fill="#fff" font-size="16" font-weight="600" text-anchor="middle">2</text></svg></button>
    <button aria-label="Show desktop" class="h-[60px] w-[7px] border-l border-[#888]"></button>
  </div>
</div>
</body>
</html>
